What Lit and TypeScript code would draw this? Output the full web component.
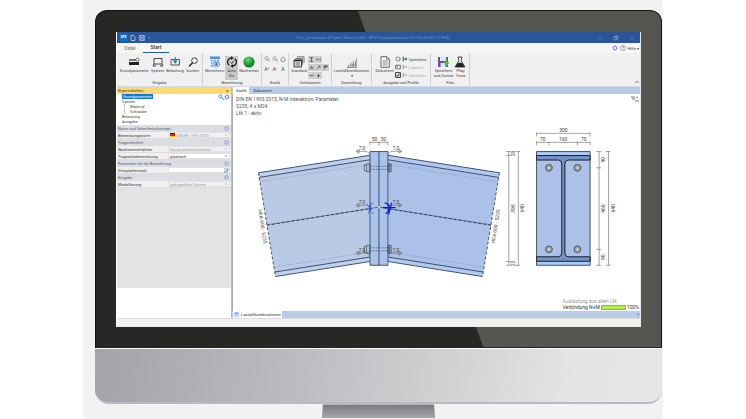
import { LitElement, html, svg, css } from "lit";
import { customElement } from "lit/decorators.js";

const icons: Record<string, unknown> = {
  params: svg`<svg viewBox="0 0 12 10"><path d="M1 2h7v2H1z" fill="#777"/><path d="M1 5h10v3H1z" fill="#222"/><circle cx="9.5" cy="2.6" r="1.6" fill="none" stroke="#555" stroke-width=".8"/></svg>`,
  system: svg`<svg viewBox="0 0 12 10"><path d="M2 1.5h8v5.5H2zM1 9h3M8 9h3M2 7L1 9M10 7l1 2" fill="none" stroke="#333" stroke-width=".9"/></svg>`,
  load: svg`<svg viewBox="0 0 12 10"><path d="M2 2.5h8.5v5.5H2z" fill="none" stroke="#444" stroke-width=".9"/><path d="M6.2 0v5M4.5 3.5L6.2 6l1.7-2.5" stroke="#12999a" stroke-width="1.2" fill="#12999a"/></svg>`,
  search: svg`<svg viewBox="0 0 12 10"><circle cx="7.5" cy="3.6" r="2.8" fill="#fff" stroke="#222" stroke-width=".9"/><path d="M5.5 5.8L2 9.4" stroke="#222" stroke-width="1.4"/></svg>`,
  calc: svg`<svg viewBox="0 0 12 12"><path d="M1 .5h10v11H1z" fill="#d7e6f8"/><path d="M1 .5h10v2.5H1z" fill="#4f8edb"/><path d="M2 4h2v1.5H2zM5 4h2v1.5H5zM8 4h2v1.5H8zM2 6.5h1.5V8H2zM2 9h2v1.5H2z" fill="#7aa8de"/><ellipse cx="7.4" cy="8.3" rx="3.2" ry="2" fill="#fff" stroke="#2a6fc4" stroke-width=".8"/><circle cx="7.4" cy="8.3" r="1.2" fill="#1b5eb5"/></svg>`,
  auto: svg`<svg viewBox="0 0 12 12"><path d="M3.2 9.2A4 4 0 0 1 5.5 2M8.8 2.8A4 4 0 0 1 6.5 10" fill="none" stroke="#111" stroke-width="1.1"/><path d="M5 .3L7.6 2 5 3.7zM7 8.3L4.4 10 7 11.7z" fill="#111"/><path d="M4.6 6.2l1.2 1.3 2-3" fill="none" stroke="#333" stroke-width=".8"/></svg>`,
  ball: svg`<svg viewBox="0 0 12 12"><defs><radialGradient id="g" cx=".42" cy=".3" r=".7"><stop offset="0" stop-color="#6fd774"/><stop offset=".6" stop-color="#1f9a35"/><stop offset="1" stop-color="#0f6f25"/></radialGradient></defs><circle cx="6" cy="6" r="5.6" fill="url(#g)"/></svg>`,
  zoom: svg`<svg viewBox="0 0 6 6"><circle cx="2.6" cy="2.4" r="1.7" fill="none" stroke="#777" stroke-width=".7"/><path d="M3.8 3.6L5.6 5.5" stroke="#777" stroke-width=".8"/></svg>`,
  zoomb: svg`<svg viewBox="0 0 6 6"><circle cx="2.6" cy="2.4" r="1.7" fill="#dcf1fb" stroke="#5b94b5" stroke-width=".7"/><path d="M3.8 3.6L5.6 5.5" stroke="#3b6580" stroke-width=".8"/></svg>`,
  home: svg`<svg viewBox="0 0 6 6"><path d="M.4 3.2L3 .8l2.6 2.4M1.2 2.8v2.6h3.6V2.8" fill="none" stroke="#777" stroke-width=".7"/></svg>`,
  stack: svg`<svg viewBox="0 0 12 12"><path d="M4 .8h7v6M2.5 2.5h7V9" fill="none" stroke="#555" stroke-width=".8"/><path d="M1 4h7.5v7H1z" fill="#ddd" stroke="#333" stroke-width=".9"/><path d="M1 4.5h7.5" stroke="#222" stroke-width="1.4"/><path d="M2.5 7h4.5M2.5 9h4.5" stroke="#555" stroke-width=".7"/></svg>`,
  bars: svg`<svg viewBox="0 0 12 12"><path d="M1 10.500h2V8.500zM3.200 10.500h2.300V6zM5.700 10.500h2.300V3.500zM8.200 10.500h2.500V.5z" fill="#888"/><path d="M1 11.500h10" stroke="#555" stroke-width=".6"/></svg>`,
  doc: svg`<svg viewBox="0 0 12 12"><path d="M2 .7h5.800L10.300 3.200v8.100H2z" fill="#fafafa" stroke="#444" stroke-width=".8"/><path d="M7.600.7v2.700h2.700M3.800 5h4.700M3.800 7h4.700M3.800 9h4.700" fill="none" stroke="#555" stroke-width=".7"/></svg>`,
  save: svg`<svg viewBox="0 0 12 12"><path d="M1 1h10v10H1z" fill="#6b4fa3"/><path d="M3 1h6v4H3z" fill="#e8e4f3"/><path d="M3.500 7h5v4h-5z" fill="#cfe7ee"/><path d="M9.500 3v5M7.500 6.500L9.500 9.500l2-3z" stroke="#58b947" stroke-width="1.2" fill="#58b947"/></svg>`,
  flask: svg`<svg viewBox="0 0 12 12"><path d="M4 1h4v.9h-.7v3L11 11H1l3.700-6.100v-3H4z" fill="#fff" stroke="#222" stroke-width=".8"/><path d="M3.800 6.700h4.400L10.600 11H1.400z" fill="#222"/></svg>`,
  profile: svg`<svg viewBox="0 0 6 6"><path d="M1 .8h4M1 5.200h4M3 .8v4.400" stroke="#444" stroke-width=".9"/></svg>`,
  span: svg`<svg viewBox="0 0 6 6"><path d="M.8 1v4M5.200 1v4M.8 3h4.400" stroke="#666" stroke-width=".7"/></svg>`,
  sun: svg`<svg viewBox="0 0 6 6"><path d="M.500 4.500h5M3 1v2.600M1 2l1 1.500M5 2L4 3.500" stroke="#444" stroke-width=".7"/></svg>`,
  diag: svg`<svg viewBox="0 0 6 6"><path d="M.8 5.200L4.500 1.500M2.600 1.200h2.200v2.200" fill="none" stroke="#444" stroke-width=".8"/></svg>`,
  flag: svg`<svg viewBox="0 0 6 6"><path d="M1.500 5.500v-4.500h3.500v1.500H1.500" fill="#777" stroke="#444" stroke-width=".8"/></svg>`,
  line: svg`<svg viewBox="0 0 6 6"><path d="M.500 3h5" stroke="#555" stroke-width="1"/></svg>`,
  down: svg`<svg viewBox="0 0 6 6"><path d="M3 1v3M1.800 3h2.400L3 5z" stroke="#444" stroke-width=".6" fill="#444"/></svg>`,
  ring: svg`<svg viewBox="0 0 6 6"><circle cx="3" cy="3" r="2.100" fill="none" stroke="#444" stroke-width=".8" stroke-dasharray="2.500 .7"/></svg>`,
  image: svg`<svg viewBox="0 0 6 6"><path d="M.600 1.200h4.800v3.600H.600z" fill="#e8efe5" stroke="#444" stroke-width=".7"/><path d="M1.500 2.500h1.500" stroke="#2c9a43" stroke-width=".9"/></svg>`,
  check: svg`<svg viewBox="0 0 6 6"><path d="M.600.600h4.800v4.800H.600z" fill="#eee" stroke="#222" stroke-width=".9"/><path d="M1.600 3l1 1.300L4.600 1.700" fill="none" stroke="#222" stroke-width=".9"/></svg>`,
  out: svg`<svg viewBox="0 0 6 6"><path d="M1.200.6v4.800" stroke="#333" stroke-width=".9"/><path d="M1.500 3h3M3.500 1.800L5.200 3 3.500 4.200z" stroke="#27677c" stroke-width=".6" fill="#27677c"/></svg>`,
  outg: svg`<svg viewBox="0 0 6 6"><path d="M1.200.6v4.800M2 3h3.200" stroke="#888" stroke-width=".8"/></svg>`,
  gear: svg`<svg viewBox="0 0 6 6"><circle cx="3" cy="3" r="1.700" fill="#e9effc" stroke="#6b8ed6" stroke-width=".9"/><circle cx="3" cy="3" r="2.500" fill="none" stroke="#6b8ed6" stroke-width=".6" stroke-dasharray="1 .9"/></svg>`,
  help: svg`<svg viewBox="0 0 6 6"><circle cx="3" cy="3" r="2.500" fill="#fff" stroke="#777" stroke-width=".6"/><path d="M2.200 2.400q0-.9.800-.9t.8.8q0 .4-.8.9v.5M3 4.200v.6" fill="none" stroke="#555" stroke-width=".5"/></svg>`,
  find: svg`<svg viewBox="0 0 6 6"><circle cx="2.400" cy="2.400" r="1.600" fill="#e2f1ff" stroke="#2a7fd4" stroke-width=".8"/><path d="M3.600 3.600l2 2" stroke="#2a7fd4" stroke-width="1"/></svg>`,
  file: svg`<svg viewBox="0 0 6 6"><path d="M1 .5h2.600L5 2v3.600H1z" fill="none" stroke="#fff" stroke-width=".6"/></svg>`,
  disk: svg`<svg viewBox="0 0 6 6"><path d="M.600.6h4.800v4.800H.600zM1.600.6v1.800h2.800V.6M1.600 5.400V3.700h2.800v1.700" fill="none" stroke="#cfe0f5" stroke-width=".6"/></svg>`,
  minimize: svg`<svg viewBox="0 0 6 6"><path d="M1.500 3h3" stroke="#7f9ccb" stroke-width=".6"/></svg>`,
  restore: svg`<svg viewBox="0 0 6 6"><path d="M1.200 2h2.800v2.800H1.200zM2 2V1.200h2.800V4H4" fill="none" stroke="#9db4da" stroke-width=".6"/></svg>`,
  close: svg`<svg viewBox="0 0 6 6"><path d="M1.500 1.500l3 3M4.500 1.500l-3 3" stroke="#6f8fc6" stroke-width=".5"/></svg>`,
  up: svg`<svg viewBox="0 0 6 6"><path d="M1 4l2-2 2 2" fill="none" stroke="#666" stroke-width=".7"/></svg>`,
  edit: svg`<svg viewBox="0 0 6 6"><path d="M.500.5h4v5h-4z" fill="#fff" stroke="#6a87b8" stroke-width=".6"/><path d="M2 4.500L5.300 1" stroke="#222" stroke-width=".9"/><path d="M1.600 4.900l1-.2-.6-.6z" fill="#e0a020"/></svg>`,
  table: svg`<svg viewBox="0 0 6 6"><path d="M.800.8h4.400v4.400H.800z" fill="#e6f0ff" stroke="#6d97dd" stroke-width=".6"/><path d="M.8 1.500h4.400" stroke="#4379d2" stroke-width="1"/><path d="M1.500 3.500h3" stroke="#6d97dd" stroke-width=".5"/></svg>`,
};

const big = (icon: string, label: unknown, cls = "") =>
  html`<button class="big ${cls}"><i class="ic">${icons[icon]}</i><span>${label}</span></button>`;
const small = (icon: string, name: string, cls = "") =>
  html`<button class="small ${cls}" aria-label=${name}>${icons[icon]}</button>`;

@customElement("cad-drawing")
class CadDrawing extends LitElement {
  static styles = css`
    :host { display: block; }
    svg { display: block; width: 100%; height: auto; }
    text { font-family: Roboto, sans-serif; font-size: 5px; fill: #444; text-anchor: middle; }
    .k { stroke: #26324a; stroke-width: 0.8; fill: none; }
    .dash { stroke: #26324a; stroke-width: 0.8; stroke-dasharray: 3 2; fill: none; }
    .dot { stroke: #6c7d9c; stroke-width: 0.6; stroke-dasharray: 1 1.5; fill: none; }
    .dim { stroke: #666; stroke-width: 0.6; fill: none; }
    .nut { stroke: #333; stroke-width: 0.6; fill: none; }
    .hidden { stroke: #333; stroke-width: 0.5; stroke-dasharray: 2 1; fill: none; }
  `;

  private beam(fill: string, flange: string) {
    return svg`
      <path d="M258.500 173L370 155.500V262L275.500 277z" fill=${fill}/>
      <path d="M258.500 173L370 155.500V160L259.300 177.600zM274.800 272.500L370 257.500V262L275.500 277z" fill=${flange}/>
      <path class="k" d="M258.500 173L370 155.500M259.300 177.600L370 160M274.800 272.500L370 257.500M275.500 277L370 262"/>
      <path class="dot" d="M260 182L370 164.500M274 267.500L370 252.500"/>
      <path class="k" stroke-opacity=".6" d="M267 225.200L379 207.500"/>
      <path class="dash" d="M267 225.600L379 207.500M258.500 173L275.500 277"/>`;
  }

  private weld(y: number) {
    return [-1, 1].map((s) => {
      const x = (d: number) => 379.3 + s * d;
      return svg`<path class="dim" d="M${x(9)} ${y + 3}L${x(12)} ${y}H${x(23)}M${x(20)} ${y - 2}L${x(23)} ${y}L${x(20)} ${y + 2}z"/>
        <text x=${x(17)} y=${y - 1}>7,0</text>`;
    });
  }

  private bolt(y: number) {
    return svg`<path class="nut" d="M364.500 ${y - 3}h2.500v-1h3v8h-3v-1h-2.500zM367 ${y - 3}v6M388.500 ${y - 4}h3v8h-3zM390 ${y - 4}v8"/>
      <path class="hidden" d="M370 ${y - 1.5}h22M370 ${y + 1.5}h22"/>`;
  }

  private vdim(x: number, ticks: number[], labels: string[]) {
    return svg`<path class="dim" d="M${x} ${ticks[0]}V${ticks[ticks.length - 1]}"/>
      ${ticks.map((t) => svg`<path class="dim" d="M${x - 3} ${t}h5"/>`)}
      ${labels.map((l, i) => {
        const c = (ticks[i] + ticks[i + 1]) / 2;
        return svg`<text x=${x + 6} y=${c} transform="rotate(-90 ${x + 6} ${c})">${l}</text>`;
      })}`;
  }

  private hdim(y: number, ticks: number[], labels: string[]) {
    return svg`<path class="dim" d="M${ticks[0]} ${y}H${ticks[ticks.length - 1]}"/>
      ${ticks.map((t) => svg`<path class="dim" d="M${t} ${y - 1}v4"/>`)}
      ${labels.map((l, i) => svg`<text x=${(ticks[i] + ticks[i + 1]) / 2} y=${y - 1}>${l}</text>`)}`;
  }

  render() {
    return html`<svg viewBox="233 94 408 218" role="img" aria-label="Stirnplattenstoß">
      ${this.beam("#b9cae6", "#bcd2f0")}
      <g transform="translate(758.6 0) scale(-1 1)">${this.beam("#abc1e8", "#b0cbf3")}</g>
      <path d="M370.300 151.700h18v114h-18z" fill="#a9c3eb"/>
      <path class="k" d="M370.300 151.700h18v114h-18zM379.300 151.700v114"/>
      <path class="dash" d="M370 208.800L379.300 207.500L388.500 208.800"/>
      ${[168, 249.7].map((y) => this.bolt(y))}
      ${[151.5, 205.5, 253.5].map((y) => this.weld(y))}
      ${this.hdim(142.5, [370.3, 379.3, 388.3], ["50", "50"])}
      <g fill="none" stroke="#3547c8" stroke-width=".7"><path d="M374 203c-5 1-5 9 0 11M367 204l5 6M369 214l2-11M369 210l5-2"/></g>
      <g fill="none" stroke="#0a14e0" stroke-width="1.200"><path d="M385 203c6 2 6 8 1 11M383 208h13M392 203l-3 12M386 203l4 3"/></g>
      <circle cx="379.300" cy="207.500" r="1.200" fill="#fff9b0" stroke="#777" stroke-width=".4"/>
      <text transform="translate(261 227) rotate(81)">HEA 600 - S235</text>
      <text transform="translate(498 227) rotate(-81)">HEA 600 - S235</text>

      <path d="M537.300 151.700H591v114h-53.700z" fill="#abc1e8"/>
      <path d="M537.300 151.700H591v4h-53.700zM537.300 261.700H591v4h-53.700z" fill="#a9cbf5"/>
      <path d="M537.300 155.700H591v4.500h-22q-3.300 0-3.300 4v89q0 4 3.300 4h22v4.500h-53.700v-4.500h22q3.300 0 3.300-4v-89q0-4-3.300-4h-22z" fill="#7592c2" stroke="#151e30" stroke-width="1"/>
      <path class="k" d="M537.300 151.700H591v114h-53.700z"/>
      ${[549.7, 578.3].map((x) => [168, 249.7].map((y) => svg`<circle cx=${x} cy=${y} r="3.400" fill="#a4a8ae" stroke="#4c525d" stroke-width="1"/><circle cx=${x} cy=${y} r="1.600" fill="#ddd" stroke="#777" stroke-width=".5"/>`))}
      ${this.hdim(133.5, [537.3, 591], ["300"])}
      ${this.hdim(142.5, [537.3, 549.7, 578.3, 591], ["70", "160", "70"])}
      ${this.vdim(509.5, [151.7, 155.5, 262, 265.7], ["20", "598", "22"])}
      ${this.vdim(519, [151.7, 265.7], ["640"])}
      ${this.vdim(600, [151.7, 168, 249.7, 265.7], ["90", "460", "90"])}
      ${this.vdim(609.5, [151.7, 265.7], ["640"])}
      <path d="M632 97h4M633 99h3M636 101h4M637 98l2-1" stroke="#666" stroke-width=".9"/>
    </svg>`;
  }
}

@customElement("app-root")
class AppRoot extends LitElement {
  static styles = css`
    :host { display: block; background: #fff; padding: 0 83px; font: 4px/5px Roboto, "Open Sans", sans-serif; color: #444; }
    * { box-sizing: border-box; }
    button, input, select { font: inherit; color: inherit; margin: 0; padding: 0; border: 0; background: none; border-radius: 0; appearance: none; min-width: 0; opacity: 1; }
    svg { display: block; width: 100%; height: 100%; }
    ul { list-style: none; margin: 0; padding: 0; }
    .stage { background: #f2f2f2; padding: 10px 1px 1px 12px; }
    .bezel { border-radius: 12px 12px 0 0; border: 1px solid #111; border-bottom-color: #222; padding: 21px 20px 20px; background: linear-gradient(69.500deg, #272725 56%, #555552 56.200%); }
    .screen { background: #fff; border: 1px solid #e8e8e8; border-top: 0; border-left-color: #fff; }
    .chin { height: 56px; border-radius: 0 0 14px 14px; border-top: 1px solid #fff; border-bottom: 2px solid #b9babf; background: linear-gradient(100deg, #a3a4a9, #b9babe 33%, #d3d3d5 64%, #e3e3e5 82%, #e6e6e8); }
    .stand { width: 20%; height: 14px; margin: 0 auto; background: linear-gradient(#77787c, #a5a6a9); clip-path: polygon(1% 0, 99% 0, 100% 100%, 0 100%); }

    .title { display: flex; align-items: center; gap: 3px; height: 11px; padding: 0 5px 0 3px; background: #29569b; color: #7493c8; }
    .title button { width: 6px; height: 6px; }
    .title .caption { flex: 1; text-align: center; margin: 0; font: inherit; }
    .logo { width: 7px; background: #1473c4; color: #fff; font-weight: 700; font-size: 3px; line-height: 7px; text-align: center; }
    .wincontrols { display: flex; gap: 10px; }

    .tabs { display: flex; align-items: center; height: 10px; background: #f6f6f6; font-size: 5px; padding-right: 1px; }
    .tabs .tab { width: 26px; height: 10px; color: #777; }
    .tabs .tab.on { color: #333; border-bottom: 1px solid #2b579a; font-weight: 500; }
    .help { margin-left: auto; display: flex; gap: 2px; align-items: center; font-size: 4px; }
    .help .small { width: 6px; height: 6px; }

    .ribbon { display: grid; grid-template-columns: 86px 59px 27px 43px 40px 59px 39px 1fr; height: 34px; background: #f0f0f0; border-bottom: 1px solid #cfd8e6; padding-bottom: 1px; }
    .group { display: flex; flex-direction: column; justify-content: space-between; border-right: 1px solid #d0d0d0; text-align: center; }
    .tools { display: flex; justify-content: center; padding-top: 3px; gap: 1px; }
    .group.wide .tools { gap: 2px; }
    .big { display: flex; flex-direction: column; align-items: center; height: 24px; white-space: pre-line; }
    .big.on { background: #c8c8c8; width: 13px; }
    .ic { width: 12px; height: 12px; }
    .small { width: 6px; height: 6px; }
    .grid { display: grid; grid-template-columns: repeat(3, 6px); gap: 4px 2px; align-content: start; }
    .grid .glyph { width: 6px; line-height: 6px; font-size: 5px; }
    .vis { display: grid; grid-template-columns: repeat(3, 7px); gap: 1px 0; align-content: start; }
    .vis .small { width: 7px; height: 7px; background: #cfcfcf; padding: 1px; }
    .list { display: grid; gap: 2px; align-content: start; text-align: left; }
    .list .row { display: flex; gap: 1px; align-items: center; height: 6px; white-space: nowrap; }
    .list .off { color: #aaa; }
    .collapse { align-self: end; justify-self: end; width: 6px; height: 6px; }

    .body { display: grid; grid-template-columns: 115px 1fr; }
    .side { display: flex; flex-direction: column; background: #fff; border-right: 1px solid #bbb; }
    .sidehead { display: flex; justify-content: space-between; height: 7px; line-height: 7px; padding: 0 3px 0 1px; margin: 0; background: #fbd872; color: #4b4119; font-size: 4px; font-weight: 400; }
    .treebox { display: flex; align-items: flex-start; height: 31px; padding: 0 1px 0 5px; }
    .tree { flex: 1; }
    .tree .sel { background: #0f78d7; color: #fff; width: 31px; display: block; padding-left: 1px; }
    .tree ul { padding-left: 5px; margin-left: 2px; border-left: 1px dotted #aaa; }
    .treebox .small { width: 6px; height: 6px; }
    .props { background: #e3e3e3; height: 163px; }
    .cat { display: flex; justify-content: space-between; align-items: center; height: 7px; padding: 0 2px 0 1px; margin: 0; background: #dcdde3; color: #555c70; font-weight: 400; font-size: 4px; }
    .cat .small { width: 5px; height: 5px; }
    .prop { display: grid; grid-template-columns: 50px 1fr; align-items: center; height: 7px; padding: 0 1px; background: #f0f0f0; border-bottom: 1px solid #ddd; color: #333; }
    .field { display: flex; align-items: center; height: 6px; background: #fff; border: 1px solid #e2e2e2; padding-left: 1px; gap: 1px; }
    .field.off { background: #f1f1f1; color: #999; }
    .field select, .field input { flex: 1; height: 5px; line-height: 5px; }
    .de { width: 5px; height: 4px; background: linear-gradient(#222 33%, #d22 33% 66%, #f4c20d 66%); }
    .field .small { width: 5px; height: 5px; }
    .arrow { width: 4px; font-size: 3px; line-height: 4px; }

    .work { display: flex; flex-direction: column; min-width: 0; }
    .viewtabs { display: flex; height: 7px; background: #b9cce6; gap: 1px; padding-left: 1px; }
    .viewtabs button { padding: 0 3px; color: #26324a; display: flex; align-items: center; gap: 3px; }
    .viewtabs .on { background: #fff; }
    .viewtabs.low button { padding: 0 1px; gap: 2px; }
    .viewtabs i { width: 5px; height: 5px; }
    .viewtabs .pin { margin-left: auto; }
    .canvas { display: grid; background: #fff; border-left: 1px solid #aaa; }
    .canvas > * { grid-area: 1 / 1; }
    .info { padding: 2px 3px; font-size: 5px; line-height: 7px; color: #555; margin: 0; }
    .usage { align-self: end; justify-self: end; display: grid; grid-template-columns: auto 25px auto; gap: 0 1px; font-size: 5px; line-height: 6px; padding: 0 1px 1px; color: #333; align-items: center; }
    .usage .all { grid-column: 1 / -1; color: #999; }
    .bar { height: 5px; background: #b8ea4b; border: 1px solid #8dbd35; }
    .status { height: 8px; background: #f1f1f0; border-top: 1px solid #ddd; }
  `;

  private gear = () => small("gear", "Einstellungen");

  private cat(name: string) {
    return html`<h3 class="cat">${name}${this.gear()}</h3>`;
  }

  private choice(label: string, value: string, off: boolean, flag = false) {
    return html`<label class="prop"><span>${label}</span>
      <span class="field ${off ? "off" : ""}">${flag ? html`<i class="de"></i>` : ""}
        <select ?disabled=${off}><option>${value}</option></select><span class="arrow">▾</span></span></label>`;
  }

  render() {
    return html`<div class="stage">
      <div class="bezel"><main class="screen">
        <header class="title">
          <span class="logo">SPS</span>
          ${small("file", "Neu")}${small("disk", "Speichern")}<span>▾</span>
          <h1 class="caption">First_geschraubt (Projekt: Demo-Stahl) - SPS+ Stirnplattenstoß 02/21A (R-2021-2/P06)</h1>
          <div class="wincontrols">${small("minimize", "Minimieren")}${small("restore", "Wiederherstellen")}${small("close", "Schließen")}</div>
        </header>
        <nav class="tabs">
          <button class="tab">Datei</button><button class="tab on">Start</button>
          <div class="help">${this.gear()}${small("help", "Hilfe")}<button>Hilfe ▾</button></div>
        </nav>
        <section class="ribbon">
          <div class="group wide"><div class="tools">${big("params", "Grundparameter")}${big("system", "System")}${big("load", "Belastung")}${big("search", "Suchen")}</div><span>Eingabe</span></div>
          <div class="group"><div class="tools">${big("calc", "Berechnen")}${big("auto", "Auto\nEin", "on")}${big("ball", "Nachweise")}</div><span>Berechnung</span></div>
          <div class="group"><div class="tools grid">${small("zoom", "Zoom")}${small("zoomb", "Fenster")}${small("home", "Gesamt")}<button class="glyph">A⁺</button><button class="glyph">A⁻</button><button class="glyph">A</button></div><span>Grafik</span></div>
          <div class="group"><div class="tools">${big("stack", "Standard")}
            <div class="vis">${small("profile", "Profil", "on")}${small("span", "Maße", "on")}<span></span>${small("sun", "Lasten", "on")}${small("diag", "Schnitt", "on")}${small("flag", "Marke", "on")}${small("line", "Linie", "on")}${small("down", "Kraft", "on")}</div></div><span>Sichtbarkeit</span></div>
          <div class="group"><div class="tools">${big("bars", "Lastfallkombination\n▾")}</div><span>Darstellung</span></div>
          <div class="group"><div class="tools">${big("doc", "Dokument")}
            <div class="list">
              <div class="row">${small("ring", "Aktualisieren")}${small("out", "Ausgabe")}<button>Speichern</button></div>
              <div class="row">${small("image", "Bild")}${small("outg", "Eingabe")}<button class="off">Laden ▾</button></div>
              <div class="row">${small("check", "Auswahl")}${small("outg", "Liste")}<button class="off">Verwalten</button></div>
            </div></div><span>Ausgabe und Profile</span></div>
          <div class="group"><div class="tools">${big("save", "Speichern\nund Zurück")}${big("flask", "Plag\nTests")}</div><span>Frilo</span></div>
          ${small("up", "Menüband reduzieren", "collapse")}
        </section>
        <div class="body">
          <aside class="side">
            <h2 class="sidehead">Eigenschaften<span>◂</span></h2>
            <div class="treebox">
              <ul class="tree">
                <li><span class="sel">Grundparameter</span></li>
                <li>System<ul><li>Material</li><li>Schraube</li></ul></li>
                <li>Belastung</li><li>Ausgabe</li>
              </ul>
              ${small("find", "Suchen")}${this.gear()}
            </div>
            <div class="props">
              ${this.cat("Norm und Sicherheitskonzept")}
              ${this.choice("Bemessungsnorm", "DIN EN 1993:2015", true, true)}
              ${this.cat("Tragsicherheit")}
              ${this.choice("Nachweisverfahren", "Komponentenmethode", true)}
              ${this.choice("Tragwerksberechnung", "plastisch", false)}
              ${this.cat("Parameter für die Berechnung")}
              <label class="prop"><span>Stirnplattenstoß</span><span class="field"><input type="text">${small("edit", "Bearbeiten")}</span></label>
              ${this.cat("Eingabe")}
              ${this.choice("Modellierung", "gekoppeltes System", true)}
            </div>
          </aside>
          <section class="work">
            <div class="viewtabs"><button class="on">Grafik</button><button>Dokument</button></div>
            <div class="canvas">
              <cad-drawing></cad-drawing>
              <p class="info">DIN EN 1993:2015, N-M Interaktion, Parameter<br>S235, 4 x M24<br>Lfk 1 - aktiv</p>
              <div class="usage"><span class="all">Auslastung aus allen Lfk</span><span>Verbindung N+M</span><i class="bar"></i><span>100%</span></div>
            </div>
            <div class="viewtabs low"><button class="on"><i>${icons.table}</i>Lastfallkombinationen</button><button class="pin">▪</button></div>
          </section>
        </div>
        <footer class="status"></footer>
      </main></div>
      <div class="chin"></div>
      <div class="stand"></div>
    </div>`;
  }
}
